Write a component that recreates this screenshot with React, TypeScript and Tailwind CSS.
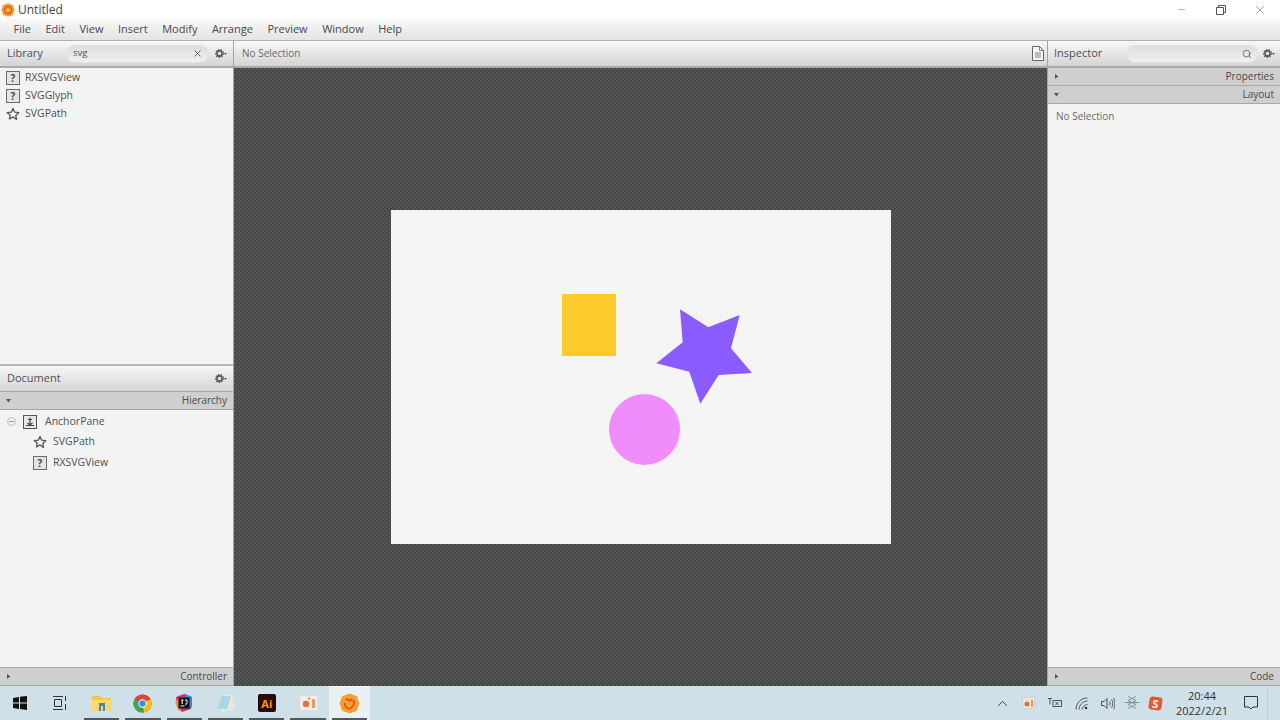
import React from "react";
import { Search, X, Minus, ChevronUp } from "lucide-react";

const Gear = () => (
  <svg width="12" height="9" viewBox="0 0 12 9" className="shrink-0">
    <circle cx="4.5" cy="4.5" r="2.6" fill="none" stroke="#555" strokeWidth="1.6" />
    <circle cx="4.5" cy="4.5" r="4" fill="none" stroke="#555" strokeWidth="1.2" strokeDasharray="1.4 1.4" />
    <path d="M9 4h3l-1.5 2z" fill="#555" />
  </svg>
);

const Question = () => (
  <span className="w-[14px] h-[14px] border border-[#6a6a6a] bg-[#e4e4e4] flex items-center justify-center text-[10px] font-bold text-[#444] leading-none shrink-0">?</span>
);

const Star = () => (
  <svg width="14" height="14" viewBox="0 0 24 24" className="shrink-0" fill="none" stroke="#555" strokeWidth="2.2" strokeLinejoin="round">
    <path d="M12 2.5l2.9 6.4 7 .8-5.2 4.7 1.4 6.9L12 17l-6.100 3.500 1.400-6.900L2.100 9.700l7-.8z" />
  </svg>
);

const Anchor = () => (
  <span className="w-[14px] h-[14px] border border-[#555] bg-[#e8e8e8] flex items-center justify-center shrink-0">
    <svg width="10" height="10" viewBox="0 0 10 10" stroke="#444" strokeWidth="1.2" fill="none">
      <path d="M5 0.500v7M3 2.500h4M1 8.500h8M2.500 6l2.500 2 2.500-2" />
    </svg>
  </span>
);

const Row = ({ icon, label }: { icon: React.ReactNode; label: string }) => (
  <div className="h-[18px] flex items-center gap-[5px] pl-[6px] text-[#505050]">
    {icon}
    <span>{label}</span>
  </div>
);

const Header = ({ children }: { children: React.ReactNode }) => (
  <div className="h-[27px] flex items-center bg-gradient-to-b from-[#f8f8f8] to-[#d4d4d4] border-b-2 border-[#a9a9a9] shrink-0">
    {children}
  </div>
);

const Strip = ({ label, open }: { label: string; open?: boolean }) => (
  <div className="h-[18px] shrink-0 flex items-center justify-between pl-[6px] pr-[6px] bg-[#cfcfcf] border-b border-[#a8a8a8] text-[10px] text-[#4a4a4a]">
    <svg width="5" height="5" viewBox="0 0 5 5" fill="#555">
      {open ? <path d="M0 1h5L2.500 4.500z" /> : <path d="M1 0v5l3.500-2.500z" />}
    </svg>
    <span>{label}</span>
  </div>
);

const SearchBox = ({ value, icon }: { value?: string; icon: React.ReactNode }) => (
  <div className="h-[18px] rounded-full bg-gradient-to-b from-[#dcdcdc] to-[#f0f0f0] border border-[#e2e2e2] flex items-center justify-between pl-[6px] pr-[5px] text-[9.500px] text-[#555] flex-1">
    <span>{value}</span>
    {icon}
  </div>
);

const TaskIcon = ({ children, active, line = true }: { children: React.ReactNode; active?: boolean; line?: boolean }) => (
  <div className={`relative w-[41.300px] h-full flex items-center justify-center shrink-0 ${active ? "bg-[#e9f1f5]" : ""}`}>
    {children}
    {line && <span className="absolute bottom-0 left-[3px] right-[3px] h-[2px] bg-[#50585c]" />}
  </div>
);

const Logo = ({ size }: { size: number }) => (
  <svg width={size} height={size} viewBox="0 0 20 20">
    <path d="M10 0.500l7 2.500 2.500 7-2.500 7-7 2.500-7-2.500-2.500-7 2.500-7z" fill="#f4a02c" />
    <circle cx="10" cy="10" r="5" fill="none" stroke="#e2552a" strokeWidth="2" />
    <circle cx="10" cy="10" r="1.800" fill="#f7d9a8" />
  </svg>
);

export default function App() {
  return (
    <div className="w-[1280px] h-[720px] flex flex-col overflow-hidden bg-white font-['Open_Sans','Liberation_Sans',sans-serif] text-[10.500px] text-[#505050]">
      {/* title bar */}
      <div className="h-[19px] shrink-0 bg-white flex items-center text-[12px] text-[#444]">
        <span className="ml-[1px] mr-[3px] flex"><Logo size={14} /></span>
        <span>Untitled</span>
        <div className="ml-auto flex items-center text-[#666]">
          <span className="w-[39px] flex justify-center"><Minus size={11} strokeWidth={1} /></span>
          <span className="w-[39px] flex justify-center">
            <svg width="10" height="10" viewBox="0 0 10 10" fill="none" stroke="#555">
              <path d="M0.500 2.500h7v7h-7zM2.500 2.500v-2h7v7h-2" />
            </svg>
          </span>
          <span className="w-[40px] flex justify-center"><X size={14} strokeWidth={1} /></span>
        </div>
      </div>
      {/* menu */}
      <div className="h-[22px] shrink-0 bg-gradient-to-b from-[#f8f8f8] to-[#e4e4e4] border-b border-[#b0b0b0] flex items-center gap-[14.500px] pl-[13.500px] text-[11px] text-[#484848]">
        {["File", "Edit", "View", "Insert", "Modify", "Arrange", "Preview", "Window", "Help"].map((m) => (
          <span key={m}>{m}</span>
        ))}
      </div>
      {/* main */}
      <div className="flex-1 min-h-0 flex">
        {/* left */}
        <div className="w-[234px] shrink-0 flex flex-col bg-[#f3f3f3] border-r border-[#a5a5a5]">
          <Header>
            <span className="ml-[7px] w-[59px] text-[11px]">Library</span>
            <SearchBox value="svg" icon={<X size={11} strokeWidth={2} color="#555" />} />
            <span className="mx-[6px] flex"><Gear /></span>
          </Header>
          <div className="h-[298px] shrink-0 pt-[1px] border-b-2 border-[#b5b5b5]">
            <Row icon={<Question />} label="RXSVGView" />
            <Row icon={<Question />} label="SVGGlyph" />
            <Row icon={<Star />} label="SVGPath" />
          </div>
          <div className="h-[26px] shrink-0 flex items-center justify-between pl-[7px] pr-[6px] bg-gradient-to-b from-[#f6f6f6] to-[#d6d6d6] border-b border-[#a9a9a9] text-[11px]">
            <span>Document</span>
            <Gear />
          </div>
          <Strip label="Hierarchy" open />
          <div className="flex-1 pt-[1px] border-b border-[#a9a9a9]">
            <div className="h-[21px] flex items-center pl-[7px] gap-[7px]">
              <span className="w-[9px] h-[9px] rounded-full border border-[#bbb] flex items-center justify-center">
                <span className="w-[5px] h-[1px] bg-[#999]" />
              </span>
              <Anchor />
              <span className="ml-[1px]">AnchorPane</span>
            </div>
            <div className="h-[20px] flex items-center pl-[33px] gap-[6px]"><Star /><span>SVGPath</span></div>
            <div className="h-[21px] flex items-center pl-[33px] gap-[6px]"><Question /><span>RXSVGView</span></div>
          </div>
          <Strip label="Controller" />
        </div>
        {/* center */}
        <div className="flex-1 min-w-0 flex flex-col">
          <Header>
            <span className="ml-[8px] text-[10px] text-[#6a6a6a]">No Selection</span>
            <svg width="14" height="15" viewBox="0 0 14 15" className="ml-auto mr-[2px]" fill="#f5f5f5" stroke="#666">
              <path d="M1.500 0.500h7l4 4v10h-11z" />
              <path d="M8.500 0.500v4h4M4 7h6M4 9h6M4 11h6" fill="none" strokeWidth="0.800" />
            </svg>
          </Header>
          <div className="flex-1 flex items-center justify-center bg-[#4e4e4e] bg-[repeating-conic-gradient(#555555_0_25%,#474747_0_50%)] bg-[length:4px_4px]">
            <div className="relative w-[500px] h-[334px] -mt-[1px] bg-[#f4f4f5]">
              <div className="absolute left-[171px] top-[84px] w-[54px] h-[62px] bg-[#ffca2c]" />
              <div className="absolute left-[218.500px] top-[184px] w-[71px] h-[71px] rounded-full bg-[#f08cfb]" />
              <svg className="absolute left-[260px] top-[94px]" width="110" height="105" viewBox="0 0 110 105">
                <path d="M29 5.300L57.300 23.300 88.700 11 80 44.300 101 69 67.700 71 49.300 99.700 38.300 67.700 5.300 59.300 31.700 38.300z" fill="#8a5cff" />
              </svg>
            </div>
          </div>
        </div>
        {/* right */}
        <div className="w-[233px] shrink-0 flex flex-col bg-[#f3f3f3] border-l border-[#a5a5a5]">
          <Header>
            <span className="ml-[6px] w-[72px] text-[11px]">Inspector</span>
            <SearchBox icon={<Search size={10} strokeWidth={1.800} color="#555" />} />
            <span className="mx-[5px] flex"><Gear /></span>
          </Header>
          <Strip label="Properties" />
          <Strip label="Layout" open />
          <div className="flex-1 pl-[8px] pt-[5px] text-[10px] text-[#6a6a6a] border-b border-[#a9a9a9]">No Selection</div>
          <Strip label="Code" />
        </div>
      </div>
      {/* taskbar */}
      <div className="h-[34px] shrink-0 bg-[#cfe0e8] flex items-center text-[#222]">
        <div className="w-[40px] flex justify-center">
          <svg width="14" height="14" viewBox="0 0 14 14" fill="#111">
            <path d="M0 2l6-1v5.500H0zM7 0.800L14 0v6.500H7zM0 7.500h6V13l-6-1zM7 7.500h7V14l-7-1z" />
          </svg>
        </div>
        <div className="w-[41px] flex justify-center">
          <svg width="15" height="14" viewBox="0 0 15 14" fill="none" stroke="#333">
            <path d="M1.500 3.500h7v7h-7zM0 0.500h10M0 13.500h10M12.500 0v5M12.500 8v6" />
          </svg>
        </div>
        <TaskIcon>
          <svg width="20" height="16" viewBox="0 0 20 16">
            <path d="M0 1h8l2 2h9v3H0z" fill="#f3c44f" />
            <path d="M0 5h20v11H0z" fill="#fbd873" />
            <path d="M7 8h6v8h-2v-5H9v5H7z" fill="#3e86c4" />
          </svg>
        </TaskIcon>
        <TaskIcon>
          <svg width="19" height="19" viewBox="0 0 48 48">
            <circle cx="24" cy="24" r="23" fill="#db4437" />
            <path d="M24 24L44 13.500A23 23 0 0 1 27 46.800z" fill="#f4c20d" />
            <path d="M24 24L27 46.800A23 23 0 0 1 4 13z" fill="#3aa757" />
            <path d="M4 13A23 23 0 0 1 44 13H24z" fill="#db4437" />
            <circle cx="24" cy="24" r="10.500" fill="#fff" />
            <circle cx="24" cy="24" r="8" fill="#4285f4" />
          </svg>
        </TaskIcon>
        <TaskIcon>
          <svg width="20" height="20" viewBox="0 0 20 20">
            <path d="M2 4l8-3 8 3-1 12-9 3-5-5z" fill="#d52a78" />
            <path d="M11 1l7 3v10l-6 2z" fill="#2b8bd9" />
            <path d="M1 9l5-5 3 10-4 4z" fill="#f28c28" />
            <path d="M4.500 4.500h11v11h-11z" fill="#111" />
            <path d="M7 7h2.500M8.200 7v4M11 7h2v3.500l-1 .8-1-.4M6.500 13h4" stroke="#fff" strokeWidth="1" fill="none" />
          </svg>
        </TaskIcon>
        <TaskIcon>
          <svg width="20" height="19" viewBox="0 0 20 19">
            <path d="M8 1h8l3 14-12 3-6-4z" fill="#e8e8e0" />
            <path d="M6 2h9l-4 13H1z" fill="#a9d5e6" />
          </svg>
        </TaskIcon>
        <TaskIcon>
          <span className="w-[18px] h-[18px] rounded-[2px] bg-[#2b0a04] text-[#ff9a00] text-[11px] font-bold flex items-center justify-center leading-none">Ai</span>
        </TaskIcon>
        <TaskIcon>
          <svg width="17" height="14" viewBox="0 0 17 14">
            <rect width="17" height="14" fill="#f2ede8" />
            <circle cx="6" cy="8" r="3.200" fill="#e3703f" />
            <rect x="12" y="3" width="3" height="9" fill="#e39a6b" />
            <circle cx="9" cy="2.500" r="1" fill="#e3703f" />
          </svg>
        </TaskIcon>
        <TaskIcon active>
          <svg width="21" height="21" viewBox="0 0 20 20">
            <path d="M10 0.500l7 2.500 2.500 7-2.500 7-7 2.500-7-2.500-2.500-7 2.500-7z" fill="#f4a02c" />
            <path d="M6 6.500c3-1.500 4 0.500 4 1 1-1 4-1.500 4.500 1 .3 3-2.500 6-4.500 6.500-3 0-5-3-4.500-5.500" fill="none" stroke="#e4512a" strokeWidth="1.700" />
          </svg>
        </TaskIcon>
        <div className="ml-auto flex items-center h-full">
          <span className="w-[26px] flex justify-center"><ChevronUp size={17} strokeWidth={1.200} /></span>
          <span className="w-[27px] flex justify-center">
            <svg width="13" height="12" viewBox="0 0 13 12">
              <rect width="13" height="12" fill="#efe6de" stroke="#bbb" />
              <circle cx="5" cy="7" r="2.500" fill="#e3703f" />
              <rect x="9" y="3" width="2" height="7" fill="#e39a6b" />
            </svg>
          </span>
          <span className="w-[26px] flex justify-center">
            <svg width="14" height="12" viewBox="0 0 14 12" fill="none" stroke="#444">
              <path d="M0 1.500h4M2 1.500v6M5 3.500h8.500v6H5zM7.500 5l3 3M10.500 5l-3 3" strokeWidth="0.900" />
            </svg>
          </span>
          <span className="w-[27px] flex justify-center">
            <svg width="13" height="13" viewBox="0 0 13 13" fill="none" stroke="#555">
              <path d="M1 12.500C1 6 6 1 12.500 1M4 12.500C4 8 8 4 12.500 4M7 12.500C7 10 10 7.500 12.500 7.500" />
              <circle cx="11" cy="11" r="1.300" fill="#333" stroke="none" />
            </svg>
          </span>
          <span className="w-[25px] flex justify-center">
            <svg width="14" height="13" viewBox="0 0 14 13" fill="none" stroke="#444">
              <path d="M0.500 4.500h2.500l3-3v10l-3-3H0.500zM8.500 4.500c.8 1 .8 3 0 4M10.500 2.500c1.800 2 1.800 6 0 8M12.500 1c2 3 2 8 0 11" strokeWidth="0.900" />
            </svg>
          </span>
          <span className="w-[23px] flex justify-center">
            <svg width="14" height="14" viewBox="0 0 14 14" fill="none" stroke="#7d8a8c">
              <path d="M3 0.500l8 4-8 4 8 4M11 0.500l-8 4 8 4-8 4M0 6.500h14" strokeWidth="0.900" />
            </svg>
          </span>
          <span className="w-[24px] flex justify-center">
            <span className="w-[13px] h-[13px] rounded-[3px] rotate-[8deg] bg-[#e8582a] text-white text-[11px] font-bold leading-none flex items-center justify-center">S</span>
          </span>
          <div className="w-[70px] flex flex-col items-center text-[11px] leading-[15px] text-[#333]">
            <span>20:44</span>
            <span>2022/2/21</span>
          </div>
          <span className="w-[28px] flex justify-center">
            <svg width="14" height="14" viewBox="0 0 14 14" fill="none" stroke="#333">
              <path d="M0.500 0.500h13v10.500h-4.500l-2 2-2-2H0.500z" />
            </svg>
          </span>
          <span className="w-[13px] h-full border-l border-[#bcd0d8] ml-[2px]" />
        </div>
      </div>
    </div>
  );
}
